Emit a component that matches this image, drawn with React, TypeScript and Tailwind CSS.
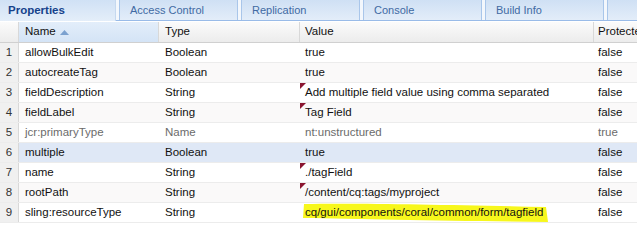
import React from 'react'

type Row = {
  name: string
  type: string
  value: string
  prot: string
  dirty?: boolean
  muted?: boolean
  selected?: boolean
  highlight?: boolean
}

const rows: Row[] = [
  { name: 'allowBulkEdit', type: 'Boolean', value: 'true', prot: 'false' },
  { name: 'autocreateTag', type: 'Boolean', value: 'true', prot: 'false' },
  { name: 'fieldDescription', type: 'String', value: 'Add multiple field value using comma separated', prot: 'false', dirty: true },
  { name: 'fieldLabel', type: 'String', value: 'Tag Field', prot: 'false', dirty: true },
  { name: 'jcr:primaryType', type: 'Name', value: 'nt:unstructured', prot: 'true', muted: true },
  { name: 'multiple', type: 'Boolean', value: 'true', prot: 'false', selected: true },
  { name: 'name', type: 'String', value: './tagField', prot: 'false', dirty: true },
  { name: 'rootPath', type: 'String', value: '/content/cq:tags/myproject', prot: 'false', dirty: true },
  { name: 'sling:resourceType', type: 'String', value: 'cq/gui/components/coral/common/form/tagfield', prot: 'false', highlight: true },
]

const tabs = ['Access Control', 'Replication', 'Console', 'Build Info', '']

const cols = 'grid grid-cols-[19px_140px_141px_294px_1fr]'

export default function App() {
  return (
    <div className="w-[637px] h-[248px] overflow-hidden bg-white text-[11.5px] text-[#111] font-['Liberation_Sans',Arial,sans-serif]">
      {/* ── TABS ─────────────────────────────────────────── */}
      <div className="flex h-[21px] border-b border-[#99bbe8] bg-[#f3f7fc] gap-[3px]">
        <div className="w-[116px] shrink-0 h-[21px] -mb-px flex items-center pl-[8px] font-bold text-[11.5px] text-[#15428b] bg-gradient-to-b from-[#d0e1f5] to-[#e4eef9] border-r border-[#c5d8ef]">
          Properties
        </div>
        {tabs.map((t, i) => (
          <div
            key={i}
            className="w-[119px] shrink-0 flex items-center pl-[10px] text-[11px] text-[#416aa3] bg-gradient-to-b from-[#cfe0f4] to-[#e3edf9] border-x border-[#a9c6ea]"
          >
            {t}
          </div>
        ))}
      </div>

      {/* ── HEADER ───────────────────────────────────────── */}
      <div className={`${cols} mt-[1px] h-[21px] border-b border-[#d0d0d0] bg-gradient-to-b from-[#fbfbfb] to-[#ececec]`}>
        <div className="border-r border-[#d8d8d8]" />
        <div className="flex items-center pl-[6px] gap-[4px] bg-gradient-to-b from-[#e3eefa] to-[#d4e4f6] border-r border-[#d8d8d8]">
          Name
          <svg width="9" height="5" viewBox="0 0 9 5">
            <polygon points="0,5 4.5,0 9,5" fill="#7ba1cf" />
          </svg>
        </div>
        <div className="flex items-center pl-[6px] border-r border-[#d8d8d8]">Type</div>
        <div className="flex items-center pl-[5px] border-r border-[#d8d8d8]">Value</div>
        <div className="flex items-center pl-[4px] whitespace-nowrap overflow-hidden">Protected</div>
      </div>

      {/* ── ROWS ─────────────────────────────────────────── */}
      {rows.map((r, i) => (
        <div
          key={r.name}
          className={`${cols} h-[20px] border-b border-[#ececec] ${
            r.selected ? 'bg-[#dfe8f6]' : i % 2 === 1 ? 'bg-[#faf9f9]' : 'bg-white'
          } ${r.muted ? 'text-[#6b6b6b]' : ''}`}
        >
          <div className="flex items-center justify-center bg-[#f0f0f0] border-r border-[#d8d8d8] text-[#333]">
            {i + 1}
          </div>
          <div className="flex items-center pl-[6px]">{r.name}</div>
          <div className="flex items-center pl-[6px]">{r.type}</div>
          <div className="relative flex items-center pl-[5px] whitespace-nowrap">
            {r.dirty && (
              <svg className="absolute left-0 top-0" width="6" height="6" viewBox="0 0 6 6">
                <polygon points="0,0 6,0 0,6" fill="#8a1530" />
              </svg>
            )}
            {r.highlight && (
              <svg className="absolute left-[2px] top-[-2px]" width="250" height="22" viewBox="0 0 250 22">
                <path d="M2 3 C60 2 150 4 244 6 L246 21 C150 20 60 18 1 17 Z" fill="#f7f71c" />
              </svg>
            )}
            <span className="relative">{r.value}</span>
          </div>
          <div className="flex items-center pl-[4px]">{r.prot}</div>
        </div>
      ))}
    </div>
  )
}
